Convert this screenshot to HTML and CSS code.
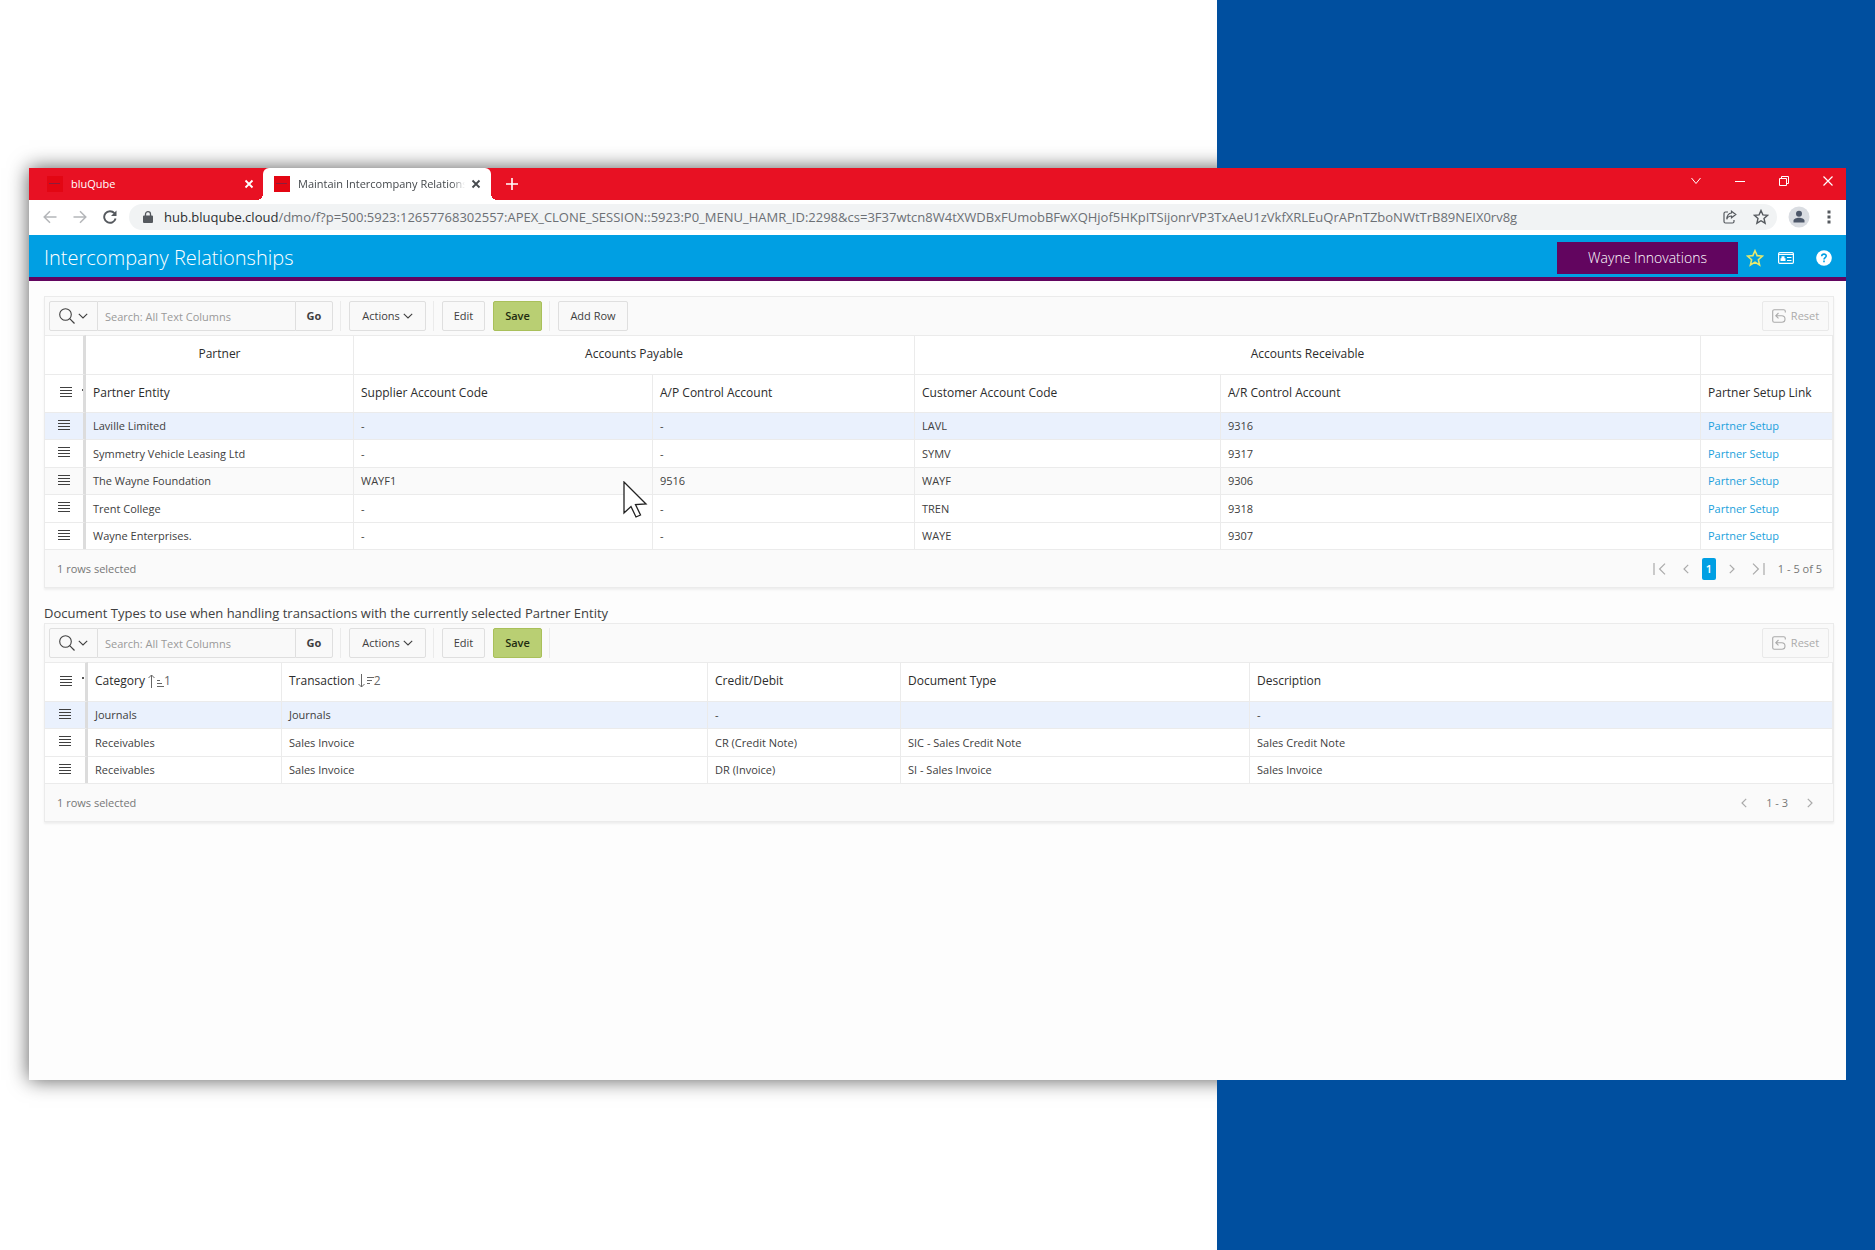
FILE: index.html
```html
<!DOCTYPE html>
<html lang="en">
<head>
<meta charset="utf-8">
<title>Intercompany Relationships</title>
<link rel="stylesheet" href="styles.css">
</head>
<body>
<svg class="defs" aria-hidden="true">
  <symbol id="i-rows" viewBox="0 0 12 11"><path d="M0 .5h12M0 3.5h12M0 6.5h12M0 9.5h12" stroke="#404040" stroke-width="1.1"/></symbol>
  <symbol id="i-down" viewBox="0 0 10 6"><path d="M.8.8 5 5 9.200.8" fill="none" stroke="currentColor" stroke-width="1.1"/></symbol>
  <symbol id="i-search" viewBox="0 0 16 16"><circle cx="6.500" cy="6.500" r="5.800" fill="none" stroke="currentColor" stroke-width="1.100"/><path d="m10.700 10.700 4.800 4.800" stroke="currentColor" stroke-width="1.200"/></symbol>
  <symbol id="i-close" viewBox="0 0 10 10"><path d="m1.500 1.500 7 7m0-7-7 7" stroke="currentColor" stroke-width="1.800"/></symbol>
  <symbol id="i-reset" viewBox="0 0 14 14"><path d="M13.300 3.500v-1.200a1.600 1.600 0 0 0-1.600-1.600H2.300A1.600 1.600 0 0 0 .7 2.300v9.400a1.600 1.600 0 0 0 1.600 1.600h7.400a3.300 3.300 0 0 0 0-6.600H4M6.500 4 3.800 6.700l2.700 2.700" fill="none" stroke="currentColor" stroke-width="1.100"/></symbol>
  <symbol id="i-star" viewBox="0 0 16 16"><path d="m8 1.500 1.900 4.400 4.700.4-3.600 3.200 1.100 4.700L8 11.700l-4.100 2.500L5 9.500 1.400 6.300l4.700-.4Z" fill="none" stroke="currentColor" stroke-width="1.400"/></symbol>
  <symbol id="i-prev" viewBox="0 0 6 10"><path d="M5.200.8 1 5l4.200 4.200" fill="none" stroke="currentColor" stroke-width="1.200"/></symbol>
  <symbol id="i-next" viewBox="0 0 6 10"><path d="M.8.8 5 5 .8 9.200" fill="none" stroke="currentColor" stroke-width="1.200"/></symbol>
</svg>
<div class="stage">
  <div class="shadow"></div>
  <div class="window">
    <div class="tabs">
      <div class="tab"><span class="favicon"></span><span class="tab-title">bluQube</span><button class="icon-btn" aria-label="Close tab"><svg width="10" height="10"><use href="#i-close"/></svg></button></div>
      <div class="tab active"><span class="favicon"></span><span class="tab-title">Maintain Intercompany Relationships</span><button class="icon-btn" aria-label="Close tab"><svg width="10" height="10"><use href="#i-close"/></svg></button></div>
      <button class="icon-btn new-tab" aria-label="New tab"><svg width="12" height="12" viewBox="0 0 12 12"><path d="M6 0v12M0 6h12" stroke="currentColor" stroke-width="1.600"/></svg></button>
      <div class="controls">
        <button class="icon-btn" aria-label="Search tabs"><svg width="10" height="8" viewBox="0 0 10 8"><path d="m.5 1 4.500 5.500L9.500 1" fill="none" stroke="currentColor"/></svg></button>
        <button class="icon-btn" aria-label="Minimise"><svg width="10" height="10" viewBox="0 0 10 10"><path d="M0 5.500h10" stroke="currentColor"/></svg></button>
        <button class="icon-btn" aria-label="Restore"><svg width="10" height="10" viewBox="0 0 10 10"><path d="M.5 2.500h7v7h-7zM2.500 2.500v-2h7v7h-2" fill="none" stroke="currentColor"/></svg></button>
        <button class="icon-btn" aria-label="Close"><svg width="10" height="10" viewBox="0 0 10 10"><path d="m.5.5 9 9m0-9-9 9" stroke="currentColor" stroke-width="1.200"/></svg></button>
      </div>
    </div>
    <div class="address">
      <div class="nav">
        <button class="icon-btn dim" aria-label="Back"><svg width="14" height="14" viewBox="0 0 14 14"><path d="M13.500 7H1.500M7 1.200 1.200 7 7 12.800" fill="none" stroke="currentColor" stroke-width="1.500"/></svg></button>
        <button class="icon-btn dim" aria-label="Forward"><svg width="14" height="14" viewBox="0 0 14 14"><path d="M.5 7h12M7 1.200 12.800 7 7 12.800" fill="none" stroke="currentColor" stroke-width="1.500"/></svg></button>
        <button class="icon-btn" aria-label="Reload"><svg width="14" height="14" viewBox="0 0 14 14"><path d="M12.600 8.500A5.800 5.800 0 1 1 11.400 3.200" fill="none" stroke="currentColor" stroke-width="1.900"/><path d="M13.500.5v5.500H8z" fill="currentColor"/></svg></button>
      </div>
      <div class="omnibox">
        <svg class="lock" width="10" height="12" viewBox="0 0 10 12"><path d="M1 4.500h8a1 1 0 0 1 1 1V11a1 1 0 0 1-1 1H1a1 1 0 0 1-1-1V5.500a1 1 0 0 1 1-1Z" fill="currentColor"/><path d="M2.500 5V3a2.500 2.300 0 0 1 5 0v2" fill="none" stroke="currentColor" stroke-width="1.300"/></svg>
        <span class="url"><b>hub.bluqube.cloud</b>/dmo/f?p=500:5923:12657768302557:APEX_CLONE_SESSION::5923:P0_MENU_HAMR_ID:2298&amp;cs=3F37wtcn8W4tXWDBxFUmobBFwXQHjof5HKpITSijonrVP3TxAeU1zVkfXRLEuQrAPnTZboNWtTrB89NEIX0rv8g</span>
        <button class="icon-btn" aria-label="Share"><svg width="14" height="14" viewBox="0 0 14 14"><path d="M5 2H2.500A1.500 1.500 0 0 0 1 3.500v8A1.500 1.500 0 0 0 2.500 13h7a1.500 1.500 0 0 0 1.500-1.500V10M8.500 1.200 12.800 4.500 8.500 7.800V6C6 6 4.500 7 3.800 9.300 4 5.500 5.500 3.300 8.500 3Z" fill="none" stroke="currentColor" stroke-width="1.200"/></svg></button>
        <button class="icon-btn" aria-label="Bookmark"><svg width="16" height="16"><use href="#i-star"/></svg></button>
      </div>
      <button class="icon-btn" aria-label="Profile"><svg width="22" height="22" viewBox="0 0 22 22"><circle cx="11" cy="11" r="10.500" fill="#dadde2"/><circle cx="11" cy="7.800" r="3" fill="#4d5769"/><path d="M5.500 16.500v-1.700c0-2 3-3 5.500-3s5.500 1 5.500 3v1.700Z" fill="#4d5769"/></svg></button>
      <button class="icon-btn menu" aria-label="Menu"><svg width="4" height="14" viewBox="0 0 4 14"><path d="M.5.500h3v3h-3zM.5 5.500h3v3h-3zM.5 10.500h3v3h-3z" fill="currentColor"/></svg></button>
    </div>
    <header class="app-header">
      <h1>Intercompany Relationships</h1>
      <button class="company">Wayne Innovations</button>
      <button class="icon-btn fav" aria-label="Favourite"><svg width="18" height="18"><use href="#i-star"/></svg></button>
      <button class="icon-btn card" aria-label="Details"><svg width="16" height="12" viewBox="0 0 16 12"><rect x=".6" y=".6" width="14.800" height="10.800" rx="1.200" fill="none" stroke="#fff" stroke-width="1.200"/><path d="M1 2.500h14M9 5.500h4.500M9 8.500h4.500" stroke="#fff"/><path d="M3.500 4.300h3v2h1V9H2.500V6.300h1z" fill="#fff"/></svg></button>
      <button class="icon-btn" aria-label="Help"><svg width="16" height="16" viewBox="0 0 16 16"><circle cx="8" cy="8" r="7.800" fill="#fff"/><path d="M5.700 6.300C5.800 3.300 10.300 3.500 10.200 6c0 1.500-2.200 1.700-2.200 3.400M8 10.600v1.700" fill="none" stroke="#009fe3" stroke-width="1.600"/></svg></button>
    </header>
    <main>
      <section class="grid">
        <div class="toolbar">
          <div class="search">
            <button aria-label="Search options"><svg width="16" height="16"><use href="#i-search"/></svg><svg width="10" height="6"><use href="#i-down"/></svg></button>
            <input type="text" aria-label="Search" placeholder="Search: All Text Columns">
            <button class="go">Go</button>
          </div>
          <div class="group"><button class="btn actions">Actions<svg width="10" height="6"><use href="#i-down"/></svg></button></div>
          <div class="group"><button class="btn edit">Edit</button><button class="btn save">Save</button></div>
          <div class="group"><button class="btn add">Add Row</button></div>
          <button class="btn reset" disabled><svg width="14" height="14"><use href="#i-reset"/></svg>Reset</button>
        </div>
        <table class="partners">
          <colgroup><col class="c-handle"><col class="c-partner"><col class="c-supplier"><col class="c-ap"><col class="c-customer"><col><col class="c-link"></colgroup>
          <thead>
            <tr class="groups"><th></th><th>Partner</th><th colspan="2">Accounts Payable</th><th colspan="2">Accounts Receivable</th><th></th></tr>
            <tr><th class="tick"><svg width="12" height="11"><use href="#i-rows"/></svg></th><th>Partner Entity</th><th>Supplier Account Code</th><th>A/P Control Account</th><th>Customer Account Code</th><th>A/R Control Account</th><th>Partner Setup Link</th></tr>
          </thead>
          <tbody>
            <tr class="selected"><td><svg width="12" height="11"><use href="#i-rows"/></svg></td><td>Laville Limited</td><td>-</td><td>-</td><td>LAVL</td><td>9316</td><td><a href="#">Partner Setup</a></td></tr>
            <tr><td><svg width="12" height="11"><use href="#i-rows"/></svg></td><td>Symmetry Vehicle Leasing Ltd</td><td>-</td><td>-</td><td>SYMV</td><td>9317</td><td><a href="#">Partner Setup</a></td></tr>
            <tr class="hovered"><td><svg width="12" height="11"><use href="#i-rows"/></svg></td><td>The Wayne Foundation</td><td>WAYF1</td><td>9516</td><td>WAYF</td><td>9306</td><td><a href="#">Partner Setup</a></td></tr>
            <tr><td><svg width="12" height="11"><use href="#i-rows"/></svg></td><td>Trent College</td><td>-</td><td>-</td><td>TREN</td><td>9318</td><td><a href="#">Partner Setup</a></td></tr>
            <tr><td><svg width="12" height="11"><use href="#i-rows"/></svg></td><td>Wayne Enterprises.</td><td>-</td><td>-</td><td>WAYE</td><td>9307</td><td><a href="#">Partner Setup</a></td></tr>
          </tbody>
        </table>
        <footer>
          <span>1 rows selected</span>
          <div class="pager">
            <button class="icon-btn end" aria-label="First page"><svg width="13" height="12" viewBox="0 0 13 12"><path d="M1 0v12M12 .6 6.600 6l5.400 5.400" fill="none" stroke="currentColor" stroke-width="1.200"/></svg></button>
            <button class="icon-btn" aria-label="Previous page"><svg width="6" height="10"><use href="#i-prev"/></svg></button>
            <button class="page">1</button>
            <button class="icon-btn" aria-label="Next page"><svg width="6" height="10"><use href="#i-next"/></svg></button>
            <button class="icon-btn end" aria-label="Last page"><svg width="13" height="12" viewBox="0 0 13 12"><path d="M12 0v12M1 .6 6.400 6 1 11.400" fill="none" stroke="currentColor" stroke-width="1.200"/></svg></button>
            <span>1 - 5 of 5</span>
          </div>
        </footer>
      </section>
      <h2>Document Types to use when handling transactions with the currently selected Partner Entity</h2>
      <section class="grid">
        <div class="toolbar">
          <div class="search">
            <button aria-label="Search options"><svg width="16" height="16"><use href="#i-search"/></svg><svg width="10" height="6"><use href="#i-down"/></svg></button>
            <input type="text" aria-label="Search" placeholder="Search: All Text Columns">
            <button class="go">Go</button>
          </div>
          <div class="group"><button class="btn actions">Actions<svg width="10" height="6"><use href="#i-down"/></svg></button></div>
          <div class="group"><button class="btn edit">Edit</button><button class="btn save">Save</button></div>
          <div class="group"></div>
          <button class="btn reset" disabled><svg width="14" height="14"><use href="#i-reset"/></svg>Reset</button>
        </div>
        <table class="doctypes">
          <colgroup><col class="c-handle"><col class="c-category"><col class="c-transaction"><col class="c-credit"><col class="c-doctype"><col></colgroup>
          <thead>
            <tr><th class="tick"><svg width="12" height="11"><use href="#i-rows"/></svg></th><th>Category <span class="sort"><svg width="16" height="16" viewBox="0 0 16 16"><path d="M3.500 15V2M.5 5l3-3 3 3M9 7.500h3M9 10.500h5M9 13.500h7" fill="none" stroke="currentColor"/></svg>1</span></th><th>Transaction <span class="sort"><svg width="16" height="16" viewBox="0 0 16 16"><path d="M3.500 1v13M.5 11l3 3 3-3M9 4.500h7M9 7.500h5M9 10.500h3" fill="none" stroke="currentColor"/></svg>2</span></th><th>Credit/Debit</th><th>Document Type</th><th>Description</th></tr>
          </thead>
          <tbody>
            <tr class="selected"><td><svg width="12" height="11"><use href="#i-rows"/></svg></td><td>Journals</td><td>Journals</td><td>-</td><td></td><td>-</td></tr>
            <tr><td><svg width="12" height="11"><use href="#i-rows"/></svg></td><td>Receivables</td><td>Sales Invoice</td><td>CR (Credit Note)</td><td>SIC - Sales Credit Note</td><td>Sales Credit Note</td></tr>
            <tr><td><svg width="12" height="11"><use href="#i-rows"/></svg></td><td>Receivables</td><td>Sales Invoice</td><td>DR (Invoice)</td><td>SI - Sales Invoice</td><td>Sales Invoice</td></tr>
          </tbody>
        </table>
        <footer>
          <span>1 rows selected</span>
          <div class="pager short">
            <button class="icon-btn" aria-label="Previous page"><svg width="6" height="10"><use href="#i-prev"/></svg></button>
            <span>1 - 3</span>
            <button class="icon-btn" aria-label="Next page"><svg width="6" height="10"><use href="#i-next"/></svg></button>
          </div>
        </footer>
      </section>
    </main>
    <svg class="cursor" width="26" height="37" viewBox="0 0 26 37" aria-hidden="true"><path d="M1 1v31l7-6.500 5 10.500 4.500-2-5-10.500 10.500-.5Z" fill="#fff" stroke="#222" stroke-width="1.300"/></svg>
  </div>
</div>
</body>
</html>
```

FILE: styles.css
```css
* { box-sizing: border-box; }
body {
  margin: 0;
  background: #fff;
  color: #404040;
  font: 11px/16px "Open Sans", "Noto Sans", sans-serif;
}
button, input { font: inherit; color: inherit; margin: 0; }
button { padding: 0; cursor: pointer; }
svg { display: block; flex: none; }
.defs { position: absolute; width: 0; height: 0; }

/* Backdrop: white page with a blue band that covers the window's shadow */
.stage {
  position: relative;
  display: grid;
  min-height: 100vh;
  padding: 168px 29px 170px;
  isolation: isolate;
}
.stage::before {
  content: "";
  position: absolute;
  inset: 0 0 0 auto;
  width: 658px;
  background: #004f9f;
  z-index: 1;
}
.shadow, .window { grid-area: 1 / 1; }
.shadow { box-shadow: 0 0 19px rgba(0, 0, 0, .65); }
.window {
  position: relative;
  z-index: 2;
  display: flex;
  flex-direction: column;
  min-width: 0;
  background: #fdfdfd;
}
.icon-btn {
  display: flex;
  align-items: center;
  justify-content: center;
  border: 0;
  background: none;
}

/* Browser chrome */
.tabs {
  display: flex;
  height: 32px;
  background: #e81123;
  color: #fff;
}
.tab {
  position: relative;
  display: flex;
  align-items: center;
  width: 234px;
  padding: 0 9px 0 18px;
}
.tab.active {
  width: 228px;
  padding: 0 10px 0 11px;
  background: #fff;
  color: #45494d;
  border-radius: 6px 6px 0 0;
}
.tab.active::before, .tab.active::after {
  content: "";
  position: absolute;
  bottom: 0;
  width: 6px;
  height: 6px;
}
.tab.active::before { right: 100%; background: radial-gradient(circle at 0 0, #e81123 6px, #fff 6px); }
.tab.active::after { left: 100%; background: radial-gradient(circle at 100% 0, #e81123 6px, #fff 6px); }
.favicon {
  width: 16px;
  height: 16px;
  margin-right: 8px;
  background: linear-gradient(#8c1d3c, #8c1d3c) 2px 7px / 11px 1px no-repeat, #e30613;
}
.tab-title {
  flex: 1;
  overflow: hidden;
  white-space: nowrap;
}
.tab.active .tab-title {
  margin-right: 6px;
  -webkit-mask-image: linear-gradient(90deg, #000 92%, transparent);
  mask-image: linear-gradient(90deg, #000 92%, transparent);
}
.new-tab { width: 42px; }
.controls { display: flex; margin-left: auto; }
.controls .icon-btn { width: 44px; height: 26px; }
.controls .icon-btn:last-child {
  width: 40px;
  justify-content: flex-end;
  padding-right: 13px;
}
.address {
  display: flex;
  align-items: center;
  height: 35px;
  padding: 0 15px 1px 0;
  background: #fff;
  color: #55595e;
}
.nav { display: flex; gap: 16px; padding: 0 12px 0 14px; }
.dim { color: #b4b6b9; }
.omnibox {
  flex: 1;
  display: flex;
  align-items: center;
  min-width: 0;
  height: 26px;
  margin-right: 11px;
  padding: 0 8px 0 14px;
  border-radius: 13px;
  background: #f1f3f4;
}
.lock { margin-right: 11px; }
.url {
  flex: 1;
  overflow: hidden;
  white-space: nowrap;
  font-size: 13px;
  color: #6c7075;
}
.url b { font-weight: 400; color: #2a2d31; }
.omnibox .icon-btn { margin-left: 16px; }
.menu { margin-left: 17px; }

/* Application header */
.app-header {
  display: flex;
  align-items: center;
  height: 46px;
  padding: 4px 14px 0 15px;
  background: #009fe3;
  border-bottom: 4px solid #62055f;
  color: #fff;
}
h1 {
  flex: 1;
  margin: 0;
  font-size: 20px;
  line-height: 26px;
  font-weight: 300;
}
.company {
  width: 181px;
  height: 32px;
  border: 0;
  background: #62055f;
  font-size: 14px;
  font-weight: 300;
}
.fav { color: #e6e96c; margin: 0 14px 0 8px; }
.card { margin-right: 22px; }

main { padding: 15px 12px 24px 15px; }
h2 {
  margin: 16px 0 1px;
  font-size: 13px;
  line-height: 18px;
  font-weight: 400;
}

/* Interactive grid */
.grid {
  border: 1px solid #ebebeb;
  background: #fafafa;
  box-shadow: 0 2px 2px rgba(0, 0, 0, .06);
}
.toolbar {
  display: flex;
  align-items: center;
  height: 38px;
  padding: 0 4px;
}
.toolbar button {
  height: 30px;
  border: 1px solid #dfdfdf;
  border-radius: 2px;
  background: #f9f9f9;
}
.search { display: flex; }
.search button:first-child {
  display: flex;
  align-items: center;
  justify-content: center;
  gap: 3px;
  width: 49px;
  border-radius: 2px 0 0 2px;
}
.search input {
  width: 197px;
  height: 30px;
  padding: 0 7px;
  border: 1px solid #dfdfdf;
  border-width: 1px 0;
  background: #f9f9f9;
}
.search input::placeholder { color: #999; opacity: 1; }
.search .go { width: 38px; border-radius: 0 2px 2px 0; font-weight: 700; }
.group {
  display: flex;
  gap: 8px;
  height: 30px;
  margin-left: 7px;
  padding-left: 8px;
  border-left: 1px solid #ebebeb;
}
.toolbar .actions {
  display: flex;
  align-items: center;
  justify-content: center;
  gap: 3px;
  width: 77px;
}
.edit { width: 43px; }
.add { width: 70px; }
.toolbar .save {
  width: 49px;
  border-color: #a9c05a;
  background: #b9cf73;
  color: #222c10;
  font-weight: 600;
}
.toolbar .reset {
  display: flex;
  align-items: center;
  justify-content: center;
  gap: 5px;
  width: 67px;
  margin-left: auto;
  border-color: #e9e9e9;
  color: #ababab;
}

table {
  width: 100%;
  table-layout: fixed;
  border-collapse: separate;
  border-spacing: 0;
  background: #fff;
}
th, td {
  height: 27px;
  padding: 0 7px;
  border-top: 1px solid #ebebeb;
  border-right: 1px solid #ebebeb;
  text-align: left;
  white-space: nowrap;
}
tbody tr:nth-child(even) td { height: 28px; }
th {
  height: 38px;
  padding-bottom: 2px;
  font-size: 12px;
  font-weight: 500;
  color: #2c2c2c;
}
.groups th { height: 39px; text-align: center; }
.doctypes th { height: 39px; }
th:first-child, td:first-child {
  border-right: 3px solid #dcdcdc;
  padding: 0 0 2px 13px;
}
.doctypes td:first-child { padding-left: 14px; }
th.tick {
  padding-left: 15px;
  background: linear-gradient(#555, #555) 37px 14px / 2px 2px no-repeat;
}
.selected td { background: #eaf1fd; }
.hovered td { background: #fafafa; }
a { color: #1a9fdc; text-decoration: none; }
.partners .c-handle { width: 41px; }
.c-partner { width: 268px; }
.c-supplier { width: 299px; }
.c-ap { width: 262px; }
.c-customer { width: 306px; }
.c-link { width: 132px; }
.doctypes .c-handle { width: 43px; }
.c-category { width: 194px; }
.c-transaction { width: 426px; }
.c-credit { width: 193px; }
.c-doctype { width: 349px; }
.sort {
  display: inline-flex;
  align-items: center;
  vertical-align: top;
  color: #666;
}

footer {
  display: flex;
  align-items: center;
  justify-content: space-between;
  height: 38px;
  padding: 0 11px 0 12px;
  border-top: 1px solid #ebebeb;
  color: #777;
}
.pager { display: flex; align-items: center; gap: 13px; }
.pager .icon-btn { color: #aaa; }
.pager .end:first-child { margin-right: 4px; }
.pager .end { margin-left: 4px; }
.pager .page {
  width: 14px;
  height: 22px;
  border: 0;
  border-radius: 2px;
  background: #009fe3;
  color: #fff;
  font-weight: 600;
}
.pager.short { gap: 19px; padding-right: 9px; }

.cursor { position: absolute; left: 594px; top: 313px; }
```
